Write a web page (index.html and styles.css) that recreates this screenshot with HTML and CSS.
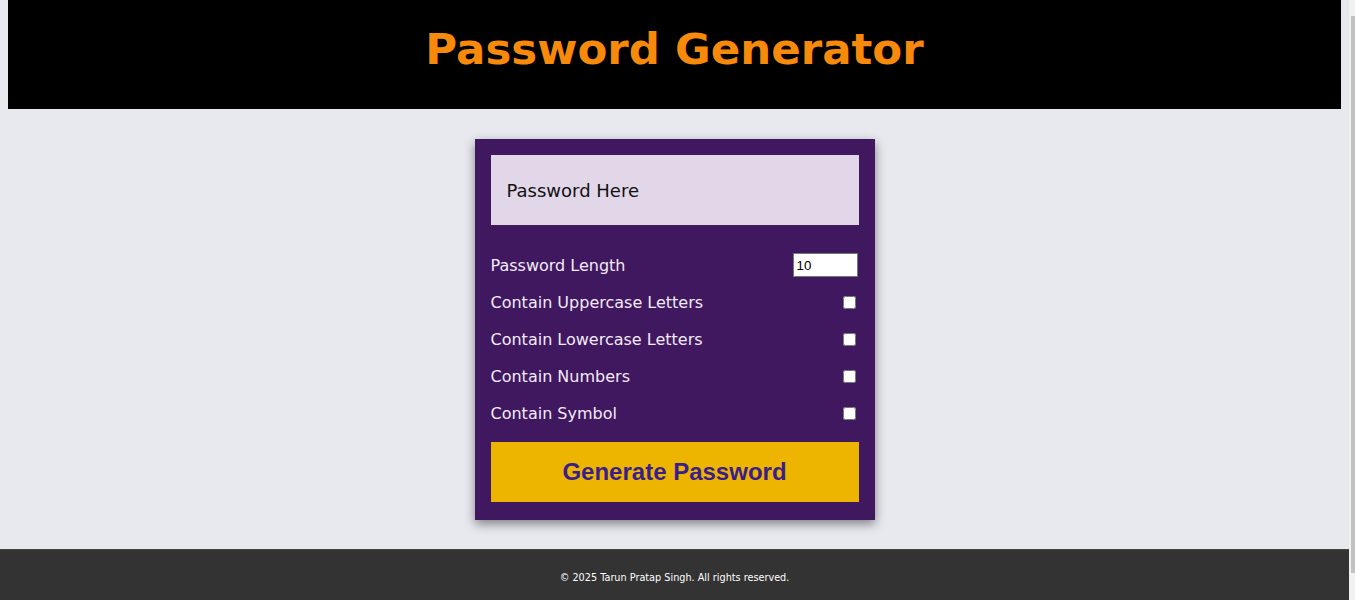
FILE: index.html
```html
<!DOCTYPE html>
<html lang="en">
<head>
<meta charset="UTF-8">
<title>Password Generator</title>
<link rel="stylesheet" href="styles.css">
</head>
<body>
<header class="site-header">
  <h1 class="title">Password Generator</h1>
</header>
<main class="main">
  <section class="card">
    <div class="result">Password Here</div>
    <div class="options">
      <div class="row">
        <label class="label" for="len">Password Length</label>
        <input class="len-input" type="number" id="len" value="10">
      </div>
      <div class="row">
        <label class="label" for="up">Contain Uppercase Letters</label>
        <input type="checkbox" id="up">
      </div>
      <div class="row">
        <label class="label" for="low">Contain Lowercase Letters</label>
        <input type="checkbox" id="low">
      </div>
      <div class="row">
        <label class="label" for="num">Contain Numbers</label>
        <input type="checkbox" id="num">
      </div>
      <div class="row">
        <label class="label" for="sym">Contain Symbol</label>
        <input type="checkbox" id="sym">
      </div>
    </div>
    <button class="gen-btn" type="button">Generate Password</button>
  </section>
</main>
<footer class="site-footer">
  <p class="copy">© 2025 Tarun Pratap Singh. All rights reserved.</p>
</footer>
<div class="fake-scroll" aria-hidden="true"><div class="fake-thumb"></div></div>
</body>
</html>
```

FILE: styles.css
```css
* { box-sizing: border-box; }

html {
  background: #e8e9ef;
}

body {
  margin: 0 6px 0 0;
  background: #e8e9ef;
  font-family: "DejaVu Sans", "Noto Sans", sans-serif;
}

.site-header {
  margin: 0 8px;
  background: #000;
  height: 109px;
  display: flex;
  align-items: center;
  justify-content: center;
  padding-bottom: 12px;
}

.title {
  margin: 0;
  color: #f7890b;
  font-size: 43.5px;
  font-weight: 700;
}

.main {
  display: flex;
  justify-content: center;
  padding-top: 30px;
  padding-bottom: 29px;
}

.card {
  width: 400px;
  background: #3f1860;
  padding: 16px 16px 18px;
  box-shadow: 0 4px 10px rgba(0, 0, 0, 0.45);
}

.result {
  height: 70px;
  background: #e1d7e9;
  color: #111;
  font-size: 18px;
  display: flex;
  align-items: center;
  padding-left: 16px;
  margin-bottom: 28px;
}

.options {
  display: flex;
  flex-direction: column;
  gap: 13px;
}

.row {
  height: 24px;
  display: flex;
  align-items: center;
  justify-content: space-between;
}

.label {
  color: #f3eaf7;
  font-size: 16px;
}

.len-input {
  width: 65px;
  height: 24px;
  margin: 0 1px 0 0;
  border: 1px solid #767676;
  font-family: "Liberation Sans", Arial, sans-serif;
  font-size: 13.3px;
  padding: 1px 3px;
  background: #fff;
  color: #000;
}

.row input[type="checkbox"] {
  width: 13px;
  height: 13px;
  margin: 0 3px 0 0;
}

.gen-btn {
  display: block;
  width: 100%;
  height: 60px;
  margin-top: 17px;
  border: none;
  background: #edb500;
  color: #3a1e8c;
  font-family: "Liberation Sans", Arial, sans-serif;
  font-size: 24px;
  font-weight: 700;
  cursor: pointer;
}

.site-footer {
  background: #333;
  border-top: 1px solid #444;
  height: 62px;
  padding-top: 22px;
}

.copy {
  margin: 0;
  text-align: center;
  color: #fff;
  font-size: 9.7px;
}

.fake-scroll {
  position: fixed;
  top: 0;
  right: 0;
  width: 6px;
  height: 100vh;
  background: #f1f1f1;
  padding: 16px 0 27px 2px;
}

.fake-thumb {
  width: 4px;
  height: 100%;
  background: #c1c1c1;
}
```
